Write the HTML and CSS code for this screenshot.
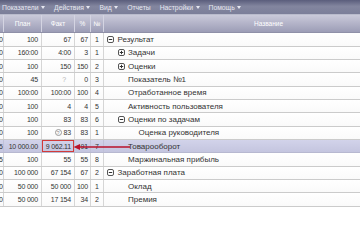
FILE: index.html
```html
<!DOCTYPE html>
<html lang="ru">
<head>
<meta charset="utf-8">
<link rel="stylesheet" href="styles.css">
</head>
<body>
<div class="page">
  <div class="menubar">
    <span class="mi">Показатели<i class="caret"></i></span>
    <span class="mi">Действия<i class="caret"></i></span>
    <span class="mi">Вид<i class="caret"></i></span>
    <span class="mi">Отчеты</span>
    <span class="mi">Настройки<i class="caret"></i></span>
    <span class="mi">Помощь<i class="caret"></i></span>
  </div>
  <div class="grid">
    <div class="row head">
      <div class="c c0"></div><div class="c">План</div><div class="c">Факт</div><div class="c">%</div><div class="c">№</div><div class="c name">Название</div>
    </div>

    <div class="row">
      <div class="c c0"><span>100</span></div><div class="c num">100</div><div class="c num">67</div><div class="c num pct">67</div><div class="c no">1</div>
      <div class="c name l0"><span class="slot"><svg class="tg" viewBox="0 0 7 7"><rect x=".5" y=".5" width="6" height="6" rx="1.5"/><path d="M1.8 3.5h3.4"/></svg></span>Результат</div>
    </div>
    <div class="row">
      <div class="c c0"><span>100</span></div><div class="c num">160:00</div><div class="c num">4:00</div><div class="c num pct">3</div><div class="c no">1</div>
      <div class="c name l1"><span class="slot"><svg class="tg" viewBox="0 0 7 7"><rect x=".5" y=".5" width="6" height="6" rx="1.5"/><path d="M1.8 3.5h3.4M3.5 1.8v3.4"/></svg></span>Задачи</div>
    </div>
    <div class="row">
      <div class="c c0"><span>100</span></div><div class="c num">100</div><div class="c num">150</div><div class="c num pct">150</div><div class="c no">2</div>
      <div class="c name l1"><span class="slot"><svg class="tg" viewBox="0 0 7 7"><rect x=".5" y=".5" width="6" height="6" rx="1.5"/><path d="M1.8 3.5h3.4M3.5 1.8v3.4"/></svg></span>Оценки</div>
    </div>
    <div class="row">
      <div class="c c0"><span>100</span></div><div class="c num">45</div><div class="c num faint">?</div><div class="c num pct">0</div><div class="c no">3</div>
      <div class="c name l1"><span class="slot"></span>Показатель №1</div>
    </div>
    <div class="row">
      <div class="c c0"><span>100</span></div><div class="c num">100:00</div><div class="c num">100:00</div><div class="c num pct">100</div><div class="c no">4</div>
      <div class="c name l1"><span class="slot"></span>Отработанное время</div>
    </div>
    <div class="row">
      <div class="c c0"><span>100</span></div><div class="c num">100</div><div class="c num">4</div><div class="c num pct">4</div><div class="c no">5</div>
      <div class="c name l1"><span class="slot"></span>Активность пользователя</div>
    </div>
    <div class="row">
      <div class="c c0"><span>100</span></div><div class="c num">100</div><div class="c num">83</div><div class="c num pct">83</div><div class="c no">6</div>
      <div class="c name l1"><span class="slot"><svg class="tg" viewBox="0 0 7 7"><rect x=".5" y=".5" width="6" height="6" rx="1.5"/><path d="M1.8 3.5h3.4"/></svg></span>Оценки по задачам</div>
    </div>
    <div class="row">
      <div class="c c0"><span>100</span></div><div class="c num">100</div><div class="c num"><span class="q">?</span>83</div><div class="c num pct">83</div><div class="c no">1</div>
      <div class="c name l2"><span class="slot"></span>Оценка руководителя</div>
    </div>
    <div class="row sel">
      <div class="c c0"><span>105</span></div><div class="c num">10 000.00</div><div class="c num boxed">9 062.11</div><div class="c num pct">91</div><div class="c no">7</div>
      <div class="c name l1"><span class="slot"></span>Товарооборот</div>
    </div>
    <div class="row">
      <div class="c c0"><span>105</span></div><div class="c num">100</div><div class="c num">55</div><div class="c num pct">55</div><div class="c no">8</div>
      <div class="c name l1"><span class="slot"></span>Маржинальная прибыль</div>
    </div>
    <div class="row">
      <div class="c c0"><span>100</span></div><div class="c num">100 000</div><div class="c num">67 154</div><div class="c num pct">67</div><div class="c no">2</div>
      <div class="c name l0"><span class="slot"><svg class="tg" viewBox="0 0 7 7"><rect x=".5" y=".5" width="6" height="6" rx="1.5"/><path d="M1.8 3.5h3.4"/></svg></span>Заработная плата</div>
    </div>
    <div class="row">
      <div class="c c0"><span>100</span></div><div class="c num">50 000</div><div class="c num">50 000</div><div class="c num pct">100</div><div class="c no">1</div>
      <div class="c name l1"><span class="slot"></span>Оклад</div>
    </div>
    <div class="row">
      <div class="c c0"><span>100</span></div><div class="c num">50 000</div><div class="c num">17 154</div><div class="c num pct">34</div><div class="c no">2</div>
      <div class="c name l1"><span class="slot"></span>Премия</div>
    </div>
  </div>
  <svg class="arrow" viewBox="0 0 57 8" width="57" height="8">
    <path class="shaft" d="M6 4H57"/>
    <path class="head" d="M0.5 4L7 1V7Z"/>
  </svg>
</div>
</body>
</html>
```
FILE: styles.css
```css
html, body {
  margin: 0;
  padding: 0;
  background: #fff;
  overflow: hidden;
}
body {
  font-family: "Liberation Sans", Arial, sans-serif;
  font-size: 8px;
  color: #333;
}
.page {
  position: relative;
  width: 360px;
  height: 240px;
  overflow: hidden;
}
.menubar {
  height: 14px;
  border-bottom: 1px solid #b9bbcc;
  background: linear-gradient(#5a5d7c, #83869f 45%, #7b7e99);
  display: flex;
  align-items: center;
  gap: 9px;
  padding-left: 2px;
  color: #e6e7f0;
  font-size: 6.8px;
  white-space: nowrap;
}
.mi {
  display: flex;
  align-items: center;
}
.caret {
  display: inline-block;
  width: 0;
  height: 0;
  margin-left: 2.5px;
  border-left: 2.5px solid transparent;
  border-right: 2.5px solid transparent;
  border-top: 3px solid #e6e7f0;
}
.grid {
  width: 434px;
}
.row {
  display: grid;
  grid-template-columns: 4px 38px 33px 16px 13px 330px;
  height: 13.333px;
  box-sizing: border-box;
  border-bottom: 1px solid #cbcbcb;
  background: linear-gradient(#ffffff, #fafafa);
}
.c {
  box-sizing: border-box;
  border-right: 1px solid #d6d6d6;
  display: flex;
  align-items: center;
  white-space: nowrap;
  overflow: hidden;
  font-size: 7px;
}
.row .c.name {
  border-right: 0;
  font-size: 8px;
}
.row.head {
  height: 18.333px;
  background: linear-gradient(#cacada, #b3b3c8 50%, #9c9db6);
  border-bottom: 1px solid #8f90a8;
  color: #fff;
}
.row.head .c {
  justify-content: center;
  border-right: 1px solid #d4d4e2;
  font-size: 6.5px;
}
.c0 {
  justify-content: flex-end;
}
.num {
  justify-content: flex-end;
  padding-right: 3px;
  letter-spacing: -0.2px;
}
.pct {
  padding-right: 2px;
}
.no {
  justify-content: center;
}
.faint {
  color: #b5b5b5;
  padding-right: 8px;
}
.q {
  display: inline-flex;
  align-items: center;
  justify-content: center;
  width: 5px;
  height: 5px;
  border: 1px solid #9a9a9a;
  border-radius: 50%;
  font-size: 5px;
  color: #8a8a8a;
  margin-right: 2px;
}
.name.l0 { padding-left: 3px; }
.name.l1 { padding-left: 13.5px; }
.name.l2 { padding-left: 24px; }
.slot {
  display: inline-flex;
  align-items: center;
  width: 10.5px;
  flex: none;
}
.tg {
  width: 7px;
  height: 7px;
  display: block;
}
.tg rect {
  fill: #fff;
  stroke: #555;
  stroke-width: 1;
}
.tg path {
  stroke: #333;
  stroke-width: 1;
  fill: none;
}
.row.sel {
  background: linear-gradient(#d2d3ea, #c4c5df);
  border-bottom-color: #b7b8d0;
}
.row.sel .c {
  border-right-color: #c0c1d8;
}
.boxed {
  box-shadow: inset 0 0 0 1px #d23a3a;
}
.arrow {
  position: absolute;
  left: 73px;
  top: 143px;
  overflow: visible;
}
.arrow .shaft {
  stroke: #b8122b;
  stroke-width: 1.4;
  fill: none;
}
.arrow .head {
  fill: #b8122b;
}
```
